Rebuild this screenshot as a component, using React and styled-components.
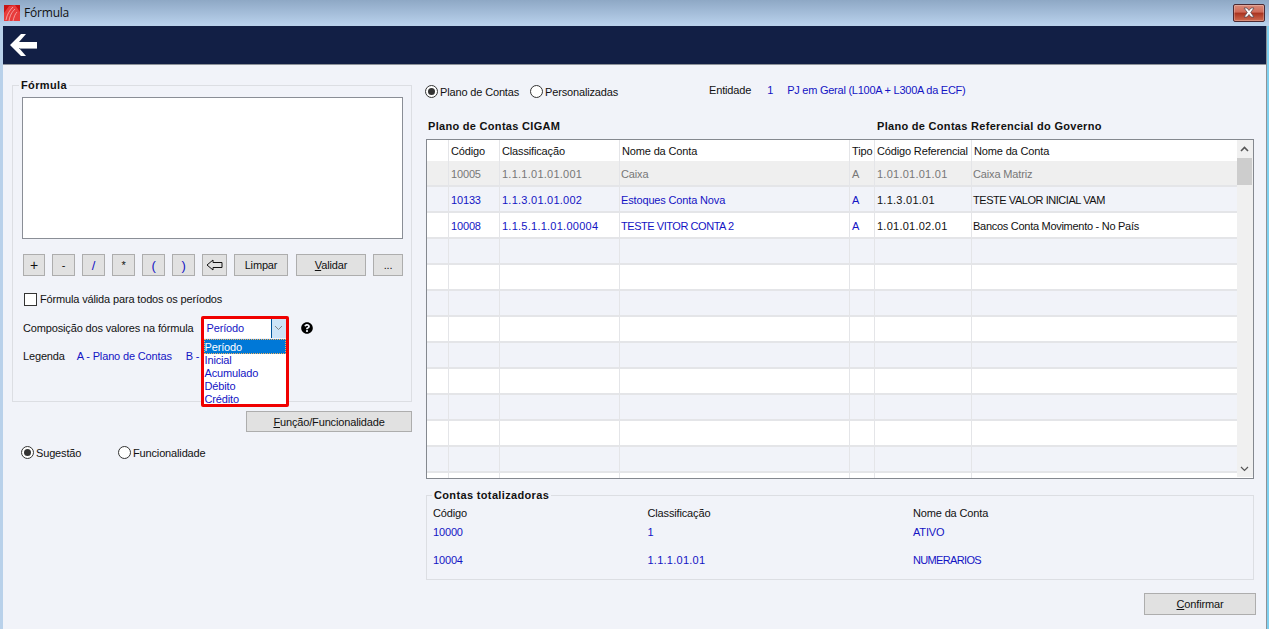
import React from "react";
import styled, { createGlobalStyle } from "styled-components";
import { FaQuestionCircle } from "react-icons/fa";

const Global = createGlobalStyle`
    html, body { margin: 0; padding: 0; background: #f1f3f9; }
    * { box-sizing: border-box; }
`;

const BLUE = "#1414c4";
const FONT = `"Liberation Sans", Arial, sans-serif`;

const Frame = styled.div`
    width: 1269px;
    height: 629px;
    overflow: hidden;
    display: flex;
    flex-direction: column;
    background: #b9d1ea;
    font-family: ${FONT};
    font-size: 11px;
    letter-spacing: -0.15px;
    color: #111;
`;

const TitleBar = styled.div`
    height: 25px;
    flex: none;
    display: flex;
    align-items: center;
    padding: 0 4px 0 4px;
    gap: 4px;
    background: linear-gradient(#8ea8c5, #b9d1ec);
`;

const TitleText = styled.span`
    font-family: "Open Sans", sans-serif;
    font-size: 12px;
    letter-spacing: -0.2px;
    color: #111;
    flex: 1;
`;

const CloseButton = styled.div`
    width: 32px;
    height: 18px;
    display: flex;
    align-items: center;
    justify-content: center;
    border: 1px solid #4c2a33;
    border-radius: 2px;
    background: linear-gradient(#d98a78 0%, #cf6a58 45%, #a9331f 50%, #cf6a50 100%);
    box-shadow: inset 0 0 0 1px rgba(255, 255, 255, 0.25);
`;

const Window = styled.div`
    flex: 1;
    min-height: 0;
    display: flex;
    flex-direction: column;
    margin: 1px 0 0 3px;
    border-right: 1px solid #8d9299;
    width: 1264px;
    background: #f1f3f9;
    position: relative;
`;

const EdgeRight = styled.div`
    position: absolute;
    right: -4px;
    top: 0;
    bottom: 0;
    width: 3px;
    background: #7fd0ef;
`;

const NavBar = styled.div`
    height: 39px;
    flex: none;
    display: flex;
    align-items: center;
    padding-left: 7px;
    background: #121f45;
    border-bottom: 1px solid #8d9299;
`;

const Body = styled.div`
    flex: 1;
    min-height: 0;
    display: flex;
    gap: 14px;
    padding: 14px 0 0 9px;
`;

const LeftColumn = styled.div`
    width: 400px;
    flex: none;
    display: flex;
    flex-direction: column;
`;

const RightColumn = styled.div`
    width: 830px;
    flex: none;
    display: flex;
    flex-direction: column;
`;

const Group = styled.fieldset`
    margin: ${(p) => p.$margin || 0};
    padding: ${(p) => p.$pad};
    width: ${(p) => p.$width || "auto"};
    height: ${(p) => p.$height};
    border: 1px solid #dcdee3;
    min-width: 0;
    display: block;
`;

const GroupTitle = styled.legend`
    margin-left: ${(p) => p.$left};
    padding: 0 2px;
    font-weight: bold;
    font-size: 11px;
    letter-spacing: 0.35px;
    line-height: 13px;
    color: #111;
`;

const FormulaBox = styled.div`
    width: 381px;
    height: 142px;
    background: #fff;
    border: 1px solid #8a8e96;
`;

const ButtonRow = styled.div`
    display: flex;
    margin-top: 15px;
    padding-left: 1px;
`;

const Btn = styled.button`
    width: ${(p) => p.$w}px;
    height: ${(p) => p.$h || 22}px;
    margin-left: ${(p) => p.$gap || 0}px;
    padding: 0;
    display: flex;
    align-items: center;
    justify-content: center;
    flex: none;
    background: #e1e1e1;
    border: 1px solid #adadad;
    font-family: ${FONT};
    font-size: ${(p) => p.$size || 11}px;
    letter-spacing: -0.15px;
    color: ${(p) => p.$color || "#111"};
    u { text-decoration: underline; }
`;

const CheckRow = styled.label`
    display: flex;
    align-items: center;
    gap: 3px;
    margin: 16px 0 0 2px;
    height: 14px;
`;

const CheckBox = styled.span`
    width: 13px;
    height: 13px;
    background: #fff;
    border: 1px solid #333;
    flex: none;
`;

const CompositionRow = styled.div`
    display: flex;
    align-items: center;
    margin: 12px 0 0 1px;
    height: 20px;
`;

const SelectWrap = styled.div`
    position: relative;
    width: 82px;
    height: 19px;
    margin-left: 10px;
    display: flex;
    background: #fff;
`;

const SelectValue = styled.span`
    flex: 1;
    padding-left: 3px;
    line-height: 19px;
    color: ${BLUE};
`;

const SelectArrow = styled.span`
    width: 15px;
    flex: none;
    display: flex;
    align-items: center;
    justify-content: center;
    background: #cce4f7;
    border-left: 1px solid #005499;
`;

const DropList = styled.ul`
    position: absolute;
    left: 0;
    top: 20px;
    width: 82px;
    margin: 0;
    padding: 0;
    list-style: none;
    background: #fff;
    z-index: 2;
`;

const DropItem = styled.li`
    height: ${(p) => (p.$active ? 15 : 13)}px;
    line-height: ${(p) => (p.$active ? 16 : 13)}px;
    padding-left: 1px;
    color: ${(p) => (p.$active ? "#fff" : BLUE)};
    background: ${(p) => (p.$active ? "#0078d7" : "#fff")};
    outline: ${(p) => (p.$active ? "1px dotted #f0b060" : "none")};
    outline-offset: -1px;
`;

const Highlight = styled.div`
    position: absolute;
    left: -3px;
    top: -3px;
    width: 88px;
    height: 91px;
    border: 3px solid #f00000;
    border-radius: 2px;
    z-index: 3;
    pointer-events: none;
`;

const HelpIcon = styled.span`
    display: flex;
    margin-left: 15px;
    font-size: 12px;
    color: #000;
`;

const LegendRow = styled.div`
    display: flex;
    margin: 12px 0 0 1px;
    line-height: 13px;
`;

const LegendItem = styled.span`
    color: ${BLUE};
    margin-left: ${(p) => p.$left}px;
`;

const WideRow = styled.div`
    display: flex;
    justify-content: flex-end;
    margin-top: 9px;
`;

const RadioRow = styled.div`
    display: flex;
    align-items: center;
    margin: ${(p) => p.$margin};
`;

const RadioLabel = styled.label`
    display: flex;
    align-items: center;
    gap: 2px;
    width: ${(p) => p.$w || "auto"};
    flex: none;
`;

const RadioCircle = styled.span`
    width: 13px;
    height: 13px;
    border-radius: 50%;
    border: 1px solid #333;
    background: #fff;
    flex: none;
    display: flex;
    align-items: center;
    justify-content: center;
    &::after {
        content: "";
        width: 7px;
        height: 7px;
        border-radius: 50%;
        background: ${(p) => (p.$on ? "#333" : "transparent")};
    }
`;

const EntityRow = styled.div`
    display: flex;
    margin-top: -4px;
`;

const EntityValue = styled.span`
    color: ${BLUE};
    letter-spacing: ${(p) => p.$track || "-0.15px"};
    margin-left: ${(p) => p.$left}px;
`;

const Headings = styled.div`
    display: flex;
    margin: 22px 0 0 2px;
    font-weight: bold;
    letter-spacing: 0.3px;
    line-height: 13px;
`;

const HeadingCell = styled.span`
    width: ${(p) => p.$w || "auto"};
    flex: none;
`;

const TableBox = styled.div`
    width: 828px;
    height: 340px;
    margin-top: 6px;
    display: flex;
    border: 1px solid #84888f;
    background: #fff;
    overflow: hidden;
`;

const GridArea = styled.div`
    width: 810px;
    flex: none;
    display: flex;
    flex-direction: column;
`;

const GridRow = styled.div`
    height: ${(p) => (p.$head ? 21 : 26)}px;
    flex: none;
    display: grid;
    grid-template-columns: 22px 51px 120px 230px 25px 97px 265px;
    background: ${(p) => p.$bg};
    color: ${(p) => p.$color};
    border-bottom: ${(p) => (p.$head ? "none" : "2px solid #e4e5e8")};
    line-height: ${(p) => (p.$head ? 23 : 26)}px;
`;

const GridCell = styled.div`
    padding-left: ${(p) => p.$pad || 2}px;
    border-right: ${(p) => (p.$last ? "none" : "1px solid #e4e5e8")};
    white-space: nowrap;
    overflow: hidden;
    color: ${(p) => p.$color || "inherit"};
    letter-spacing: ${(p) => p.$track || "inherit"};
`;

const ScrollTrack = styled.div`
    flex: 1;
    position: relative;
    background: #f0f0f0;
    margin-bottom: 1px;
`;

const ScrollUp = styled.div`
    position: absolute;
    top: 6px;
    left: 3px;
    display: flex;
`;

const ScrollDown = styled.div`
    position: absolute;
    bottom: 5px;
    left: 3px;
    display: flex;
`;

const ScrollThumb = styled.div`
    position: absolute;
    top: 18px;
    left: 0;
    width: 15px;
    height: 27px;
    background: #cdcdcd;
`;

const TotalsGrid = styled.div`
    display: grid;
    grid-template-columns: 214.5px 265.5px 1fr;
    padding: 0 0 0 6px;
`;

const TotalsHead = styled.div`
    height: 17px;
    line-height: 13px;
    margin-top: 5px;
`;

const TotalsCell = styled.div`
    height: 28px;
    line-height: 13px;
    padding-top: 2px;
    color: ${BLUE};
    letter-spacing: ${(p) => p.$track || "inherit"};
`;

const Bottom = styled.div`
    display: flex;
    justify-content: flex-end;
    margin-top: 13px;
`;

const columnsHead = ["", "Código", "Classificação", "Nome da Conta", "Tipo", "Código Referencial", "Nome da Conta"];

const accounts = [
    { cells: ["", "10005", "1.1.1.01.01.001", "Caixa", "A", "1.01.01.01.01", "Caixa Matriz"], bg: "#efefef", color: "#777", ref: "#777" },
    { cells: ["", "10133", "1.1.3.01.01.002", "Estoques Conta Nova", "A", "1.1.3.01.01", "TESTE VALOR INICIAL VAM"], bg: "#f1f3f9", color: BLUE, ref: "#111" },
    { cells: ["", "10008", "1.1.5.1.1.01.00004", "TESTE VITOR CONTA 2", "A", "1.01.01.02.01", "Bancos Conta Movimento - No País"], bg: "#fff", color: BLUE, ref: "#111" },
];

const emptyRows = Array.from({ length: 10 }, (_, i) => ({
    cells: ["", "", "", "", "", "", ""],
    bg: i % 2 === 0 ? "#f1f3f9" : "#fff",
    color: "#111",
    ref: "#111",
}));

// largura das letras difere da fonte original, ajuste por coluna
const trackFor = (text, col) => {
    if (col === 2 || col === 5) return "0.25px";
    if (text === text.toUpperCase() && text.length > 6) return "-0.45px";
    if (col === 6 && text.length > 20) return "-0.28px";
    return undefined;
};

const options = ["Período", "Inicial", "Acumulado", "Débito", "Crédito"];

const AppIcon = () => (
    <svg width="16" height="16" viewBox="0 0 16 16">
        <rect width="16" height="16" fill="#c81414" />
        <path d="M0 16 L0 8 L5 1 L11 0 L16 7 L16 16 Z" fill="#e83c3c" />
        <path d="M2 15 C3 9 6 5 9 2 M5 16 C6 10 8 7 11 4 M9 16 C10 12 11 9 13 7" stroke="#f6b8b8" strokeWidth="0.8" fill="none" />
    </svg>
);

const CloseIcon = () => (
    <svg width="14" height="11" viewBox="0 0 14 11">
        <path d="M2 1 L5 1 L7 3.5 L9 1 L12 1 L8.7 5.5 L12 10 L9 10 L7 7.5 L5 10 L2 10 L5.3 5.5 Z" fill="#fff" stroke="#5a4a50" strokeWidth="0.8" />
    </svg>
);

const BackArrow = () => (
    <svg width="28" height="24" viewBox="0 0 28 24">
        <path d="M0 12 L11 1 L16 1 L9 9 L27 9 L27 15 L9 15 L16 23 L11 23 Z" fill="#fff" />
        <path d="M10 15 L27 15 L27 16 L10 16 Z" fill="#9a9fae" />
    </svg>
);

const BackspaceArrow = () => (
    <svg width="17" height="12" viewBox="0 0 17 12">
        <path d="M1 6 L7 1 L7 3.5 L16 3.5 L16 8.5 L7 8.5 L7 11 Z" fill="none" stroke="#111" strokeWidth="1" />
    </svg>
);

const Chevron = ({ up, color = "#555", w = 9, weight }) => (
    <svg width={w} height="6" viewBox="0 0 9 6">
        <path d={up ? "M1 5 L4.5 1.5 L8 5" : "M1 1 L4.5 4.5 L8 1"} fill="none" stroke={color} strokeWidth={weight || (up ? 1.6 : 1.2)} />
    </svg>
);

export default function App() {
    return (
        <>
            <Global />
            <Frame>
                <TitleBar>
                    <AppIcon />
                    <TitleText>Fórmula</TitleText>
                    <CloseButton>
                        <CloseIcon />
                    </CloseButton>
                </TitleBar>
                <Window>
                    <EdgeRight />
                    <NavBar>
                        <BackArrow />
                    </NavBar>
                    <Body>
                        <LeftColumn>
                            <Group $height="323px" $pad="5px 9px 0 9px">
                                <GroupTitle $left="-3px">Fórmula</GroupTitle>
                                <FormulaBox />
                                <ButtonRow>
                                    <Btn $w={22} $size={14}>+</Btn>
                                    <Btn $w={23} $gap={7}>-</Btn>
                                    <Btn $w={23} $gap={7} $size={13} $color={BLUE}>/</Btn>
                                    <Btn $w={23} $gap={7}>*</Btn>
                                    <Btn $w={23} $gap={7} $size={13} $color={BLUE}>(</Btn>
                                    <Btn $w={23} $gap={7} $size={13} $color={BLUE}>)</Btn>
                                    <Btn $w={25} $gap={7}><BackspaceArrow /></Btn>
                                    <Btn $w={54} $gap={7}>Limpar</Btn>
                                    <Btn $w={70} $gap={8}><span><u>V</u>alidar</span></Btn>
                                    <Btn $w={30} $gap={7}>...</Btn>
                                </ButtonRow>
                                <CheckRow>
                                    <CheckBox />
                                    Fórmula válida para todos os períodos
                                </CheckRow>
                                <CompositionRow>
                                    Composição dos valores na fórmula
                                    <SelectWrap>
                                        <SelectValue>Período</SelectValue>
                                        <SelectArrow><Chevron color="#777" weight={0.9} /></SelectArrow>
                                        <DropList>
                                            {options.map((o, i) => (
                                                <DropItem key={o} $active={i === 0}>{o}</DropItem>
                                            ))}
                                        </DropList>
                                        <Highlight />
                                    </SelectWrap>
                                    <HelpIcon><FaQuestionCircle /></HelpIcon>
                                </CompositionRow>
                                <LegendRow>
                                    Legenda
                                    <LegendItem $left={12}>A - Plano de Contas</LegendItem>
                                    <LegendItem $left={14}>B -</LegendItem>
                                </LegendRow>
                            </Group>
                            <WideRow>
                                <Btn $w={166} $h={21}><span><u>F</u>unção/Funcionalidade</span></Btn>
                            </WideRow>
                            <RadioRow $margin="14px 0 0 9px">
                                <RadioLabel $w="97px"><RadioCircle $on />Sugestão</RadioLabel>
                                <RadioLabel><RadioCircle />Funcionalidade</RadioLabel>
                            </RadioRow>
                        </LeftColumn>
                        <RightColumn>
                            <RadioRow $margin="6px 0 0 -1px">
                                <RadioLabel $w="105px"><RadioCircle $on />Plano de Contas</RadioLabel>
                                <RadioLabel $w="179px"><RadioCircle />Personalizadas</RadioLabel>
                                <EntityRow>
                                    Entidade
                                    <EntityValue $left={16}>1</EntityValue>
                                    <EntityValue $left={14} $track="-0.25px">PJ em Geral (L100A + L300A da ECF)</EntityValue>
                                </EntityRow>
                            </RadioRow>
                            <Headings>
                                <HeadingCell $w="449px">Plano de Contas CIGAM</HeadingCell>
                                <HeadingCell>Plano de Contas Referencial do Governo</HeadingCell>
                            </Headings>
                            <TableBox>
                                <GridArea>
                                    <GridRow $head $bg="#fff" $color="#111">
                                        {columnsHead.map((c, i) => (
                                            <GridCell key={i} $last={i === 6}>{c}</GridCell>
                                        ))}
                                    </GridRow>
                                    {[...accounts, ...emptyRows].map((r, ri) => (
                                        <GridRow key={ri} $bg={r.bg} $color={r.color}>
                                            {r.cells.map((c, i) => (
                                                <GridCell key={i} $last={i === 6} $color={i >= 5 ? r.ref : undefined} $pad={i === 3 || i === 6 ? 1 : 2} $track={trackFor(c, i)}>{c}</GridCell>
                                            ))}
                                        </GridRow>
                                    ))}
                                </GridArea>
                                <ScrollTrack>
                                    <ScrollUp><Chevron up /></ScrollUp>
                                    <ScrollThumb />
                                    <ScrollDown><Chevron color="#555" /></ScrollDown>
                                </ScrollTrack>
                            </TableBox>
                            <Group $height="91px" $pad="0" $width="828px" $margin="10px 0 0 0">
                                <GroupTitle $left="5px">Contas totalizadoras</GroupTitle>
                                <TotalsGrid>
                                    <TotalsHead>Código</TotalsHead>
                                    <TotalsHead>Classificação</TotalsHead>
                                    <TotalsHead>Nome da Conta</TotalsHead>
                                    <TotalsCell>10000</TotalsCell>
                                    <TotalsCell>1</TotalsCell>
                                    <TotalsCell>ATIVO</TotalsCell>
                                    <TotalsCell>10004</TotalsCell>
                                    <TotalsCell $track="0.25px">1.1.1.01.01</TotalsCell>
                                    <TotalsCell $track="-0.65px">NUMERARIOS</TotalsCell>
                                </TotalsGrid>
                            </Group>
                            <Bottom>
                                <Btn $w={112} $h={22}><span><u>C</u>onfirmar</span></Btn>
                            </Bottom>
                        </RightColumn>
                    </Body>
                </Window>
            </Frame>
        </>
    );
}
